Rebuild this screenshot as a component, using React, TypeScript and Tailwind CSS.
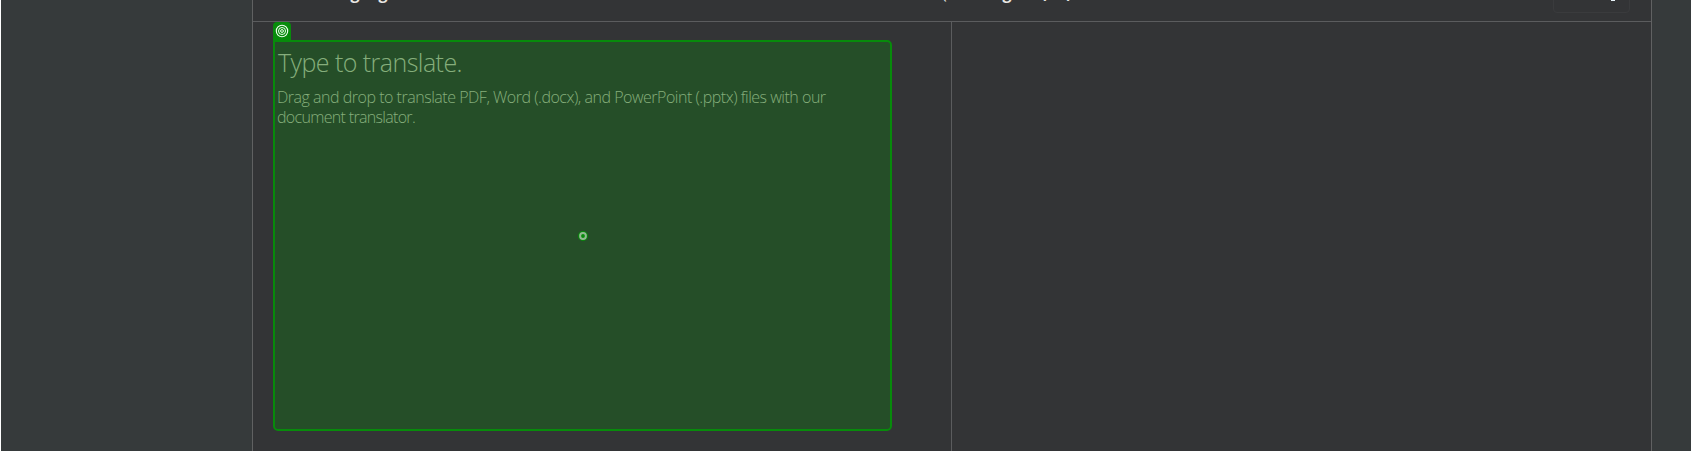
const label = "absolute -top-[17px] whitespace-nowrap text-[16px] leading-[20px] text-[#e8e6e3]";

function TargetIcon() {
  return (
    <svg className="size-3.5" viewBox="0 0 14 14" fill="none" stroke="#f2fff2">
      <circle cx="7" cy="7" r="5.7" strokeWidth="1.1" />
      <circle cx="7" cy="7" r="3.5" strokeWidth="1" />
      <circle cx="7" cy="7" r="1.4" strokeWidth="1" />
    </svg>
  );
}

export default function App() {
  return (
    <div className="flex h-[451px] w-[1691px] overflow-hidden border-l border-white bg-[#363a3b] font-['Open_Sans','Noto_Sans',sans-serif]">
      <main className="ml-[251px] flex w-[1400px] shrink-0 flex-col border-x border-[#606162] bg-[#333436]">
        <header className="relative h-[22px] shrink-0 overflow-hidden border-b border-[#5b5c5e]">
          <span className={label + " left-[20px] font-bold tracking-[-0.45px]"}>Detect language</span>
          <span className={label + " left-[689px]"}>(</span>
          <span className={label + " left-[731px] font-bold tracking-[-0.45px]"}>English (US)</span>
          <div className="absolute -top-5 left-[1300px] h-[33px] w-[77px] rounded border border-[#3a3b3d]">
            <i className="absolute top-[19px] left-[57px] h-px w-1 bg-[#e9f4fa]" />
          </div>
        </header>
        <div className="flex flex-1">
          <section className="w-[699px] shrink-0 border-r border-[#5b5c5e] pl-5">
            <div className="flex h-[18px] w-[18px] items-center justify-center rounded-t bg-[#078b0b]">
              <TargetIcon />
            </div>
            <div className="relative h-[391px] w-[619px] rounded-[5px] rounded-tl-none border-2 border-[#078b0b] bg-[#254e28] px-[3px] font-light text-[#86ae7c]">
              <h1 className="mt-[3px] text-[25px] leading-[34px] tracking-[-0.55px] whitespace-nowrap">Type to translate.</h1>
              <p className="mt-[8px] -ml-px text-[16px] leading-5">
                <span className="block tracking-[-0.48px] whitespace-nowrap">Drag and drop to translate PDF, Word (.docx), and PowerPoint (.pptx) files with our</span>
                <span className="block tracking-[-0.68px] whitespace-nowrap">document translator.</span>
              </p>
              <svg className="absolute top-[189px] left-[303px] size-[10px]" viewBox="0 0 10 10" fill="none">
                <circle cx="5" cy="5" r="5" fill="#078b0b" />
                <circle cx="5" cy="5" r="2.9" stroke="#93b891" strokeWidth="2" />
              </svg>
            </div>
          </section>
          <section className="flex-1" />
        </div>
      </main>
    </div>
  );
}
